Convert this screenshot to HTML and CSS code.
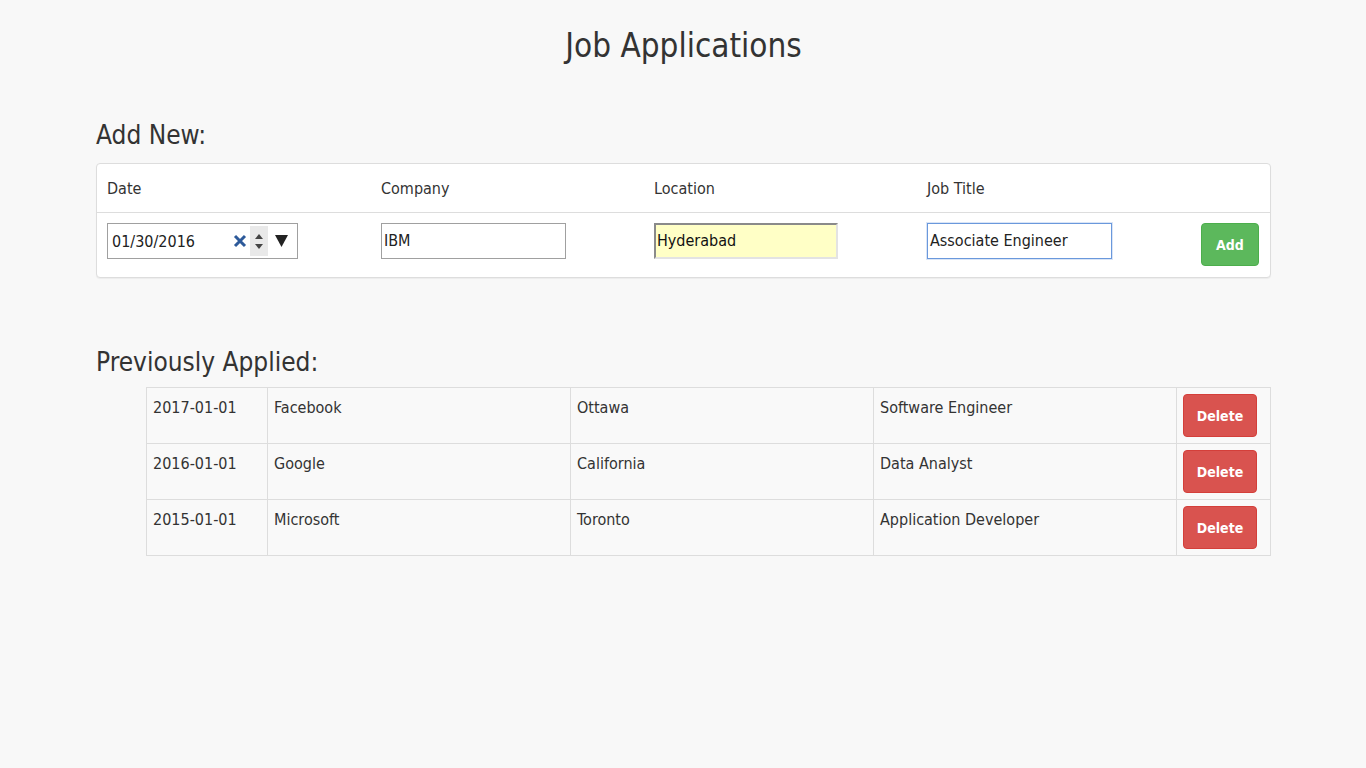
FILE: index.html
```html
<!DOCTYPE html>
<html>
<head>
<meta charset="utf-8">
<title>Job Applications</title>
<link rel="stylesheet" href="styles.css">
</head>
<body>
<div class="page">
  <h1 class="title">Job Applications</h1>

  <h2 class="section-title">Add New:</h2>
  <div class="panel">
    <div class="form-head">
      <div class="col col-first">Date</div>
      <div class="col">Company</div>
      <div class="col">Location</div>
      <div class="col">Job Title</div>
      <div class="col col-last"></div>
    </div>
    <div class="form-row">
      <div class="col col-first">
        <div class="date-input">
          <span class="date-value">01/30/2016</span>
          <svg class="date-clear" width="14" height="14" viewBox="0 0 14 14"><path d="M2 2 L12 12 M12 2 L2 12" stroke="#2d5a9a" stroke-width="3" stroke-linecap="butt"/></svg>
          <span class="date-spin">
            <svg width="8" height="5" viewBox="0 0 8 5"><path d="M0 5 L4 0 L8 5 Z" fill="#444"/></svg>
            <svg width="8" height="5" viewBox="0 0 8 5"><path d="M0 0 L4 5 L8 0 Z" fill="#444"/></svg>
          </span>
          <svg class="date-drop" width="13" height="12" viewBox="0 0 13 12"><path d="M0 0 L13 0 L6.5 12 Z" fill="#222"/></svg>
        </div>
      </div>
      <div class="col"><div class="text-input">IBM</div></div>
      <div class="col"><div class="text-input autofill">Hyderabad</div></div>
      <div class="col"><div class="text-input focused">Associate Engineer</div></div>
      <div class="col col-last"><button class="btn btn-add">Add</button></div>
    </div>
  </div>

  <h2 class="section-title applied">Previously Applied:</h2>
  <div class="table-wrap">
    <table class="applied-table">
      <tr>
        <td class="c-date">2017-01-01</td>
        <td class="c-wide">Facebook</td>
        <td class="c-wide">Ottawa</td>
        <td class="c-wide">Software Engineer</td>
        <td class="c-act"><button class="btn btn-delete">Delete</button></td>
      </tr>
      <tr>
        <td class="c-date">2016-01-01</td>
        <td class="c-wide">Google</td>
        <td class="c-wide">California</td>
        <td class="c-wide">Data Analyst</td>
        <td class="c-act"><button class="btn btn-delete">Delete</button></td>
      </tr>
      <tr>
        <td class="c-date">2015-01-01</td>
        <td class="c-wide">Microsoft</td>
        <td class="c-wide">Toronto</td>
        <td class="c-wide">Application Developer</td>
        <td class="c-act"><button class="btn btn-delete">Delete</button></td>
      </tr>
    </table>
  </div>
</div>
</body>
</html>
```

FILE: styles.css
```css
* { box-sizing: border-box; }

html, body {
  margin: 0;
  padding: 0;
  background: #f8f8f8;
}

body {
  font-family: "DejaVu Sans Condensed", "DejaVu Sans", "Roboto", sans-serif;
  color: #333;
  font-size: 16px;
}

.page {
  width: 1175px;
  margin: 0 0 0 96px;
  padding-top: 24px;
}

.title {
  margin: 0;
  height: 44px;
  line-height: 44px;
  font-size: 33px;
  font-weight: normal;
  text-align: center;
  color: #333;
}

.section-title {
  margin: 0;
  font-size: 26px;
  font-weight: normal;
  line-height: 36px;
  height: 36px;
  color: #333;
}

.title + .section-title {
  margin-top: 49px;
  margin-bottom: 10px;
}

.panel {
  background: #fff;
  border: 1px solid #ddd;
  border-radius: 4px;
  box-shadow: 0 1px 1px rgba(0,0,0,0.05);
}

.form-head,
.form-row {
  display: flex;
  padding: 0 10px;
}

.form-head {
  height: 49px;
  align-items: center;
  border-bottom: 1px solid #ddd;
}

.form-row {
  height: 64px;
  padding-top: 10px;
  align-items: flex-start;
}

.col {
  width: 273px;
  flex: 0 0 auto;
}

.col-first {
  width: 274px;
}

.col-last {
  flex: 1 1 auto;
  width: auto;
  display: flex;
  justify-content: flex-end;
}

.date-input {
  width: 191px;
  height: 36px;
  border: 1px solid #a0a0a0;
  background: #fff;
  display: flex;
  align-items: center;
  padding-left: 4px;
}

.date-value {
  width: 121px;
  color: #222;
}

.date-spin {
  width: 18px;
  height: 30px;
  margin-left: 3px;
  background: #e9e9e9;
  display: flex;
  flex-direction: column;
  align-items: center;
  justify-content: center;
  gap: 5px;
}

.date-drop {
  margin-left: 7px;
}

.text-input {
  width: 185px;
  height: 36px;
  border: 1px solid #a0a0a0;
  background: #fff;
  line-height: 34px;
  padding-left: 2px;
  color: #222;
}

.text-input.autofill {
  background: #ffffc6;
  border-style: solid;
  border-width: 2px;
  border-color: #8a8a8a #e3e3e3 #e3e3e3 #8a8a8a;
  line-height: 32px;
  padding-left: 1px;
  color: #111;
  width: 184px;
}

.text-input.focused {
  border: 1px solid #6a98dc;
  box-shadow: 0 0 0 1px rgba(106,152,220,0.25);
}

.btn {
  font-family: inherit;
  font-size: 14px;
  font-weight: bold;
  color: #fff;
  border-radius: 4px;
  cursor: pointer;
}

.btn-add {
  width: 58px;
  height: 43px;
  margin-right: 1px;
  background: #5cb85c;
  border: 1px solid #4cae4c;
}

.section-title.applied {
  margin-top: 66px;
  margin-bottom: 7px;
}

.table-wrap {
  padding-left: 50px;
}

.applied-table {
  width: 100%;
  border-collapse: collapse;
  background: #f9f9f9;
}

.applied-table td {
  border: 1px solid #ddd;
  height: 56px;
  padding: 9px 6px;
  vertical-align: top;
  line-height: 22px;
  color: #333;
}

.c-date { width: 121px; }
.c-wide { width: 303px; }
.c-act { width: 94px; padding: 6px 6px !important; }

.btn-delete {
  width: 74px;
  height: 43px;
  background: #d9534f;
  border: 1px solid #d43f3a;
}
```
